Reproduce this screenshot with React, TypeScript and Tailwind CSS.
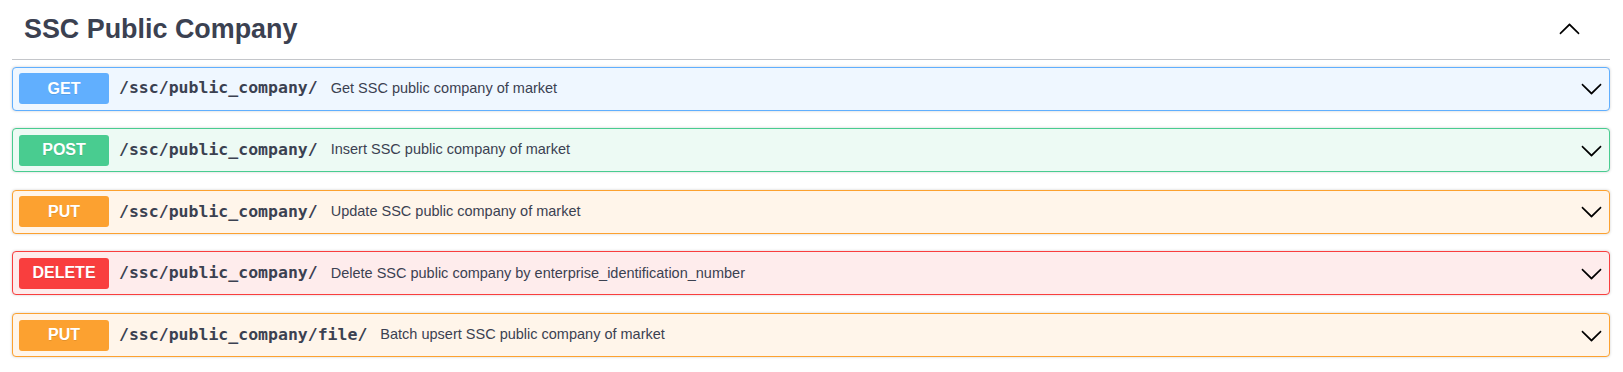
import React from 'react';

type Method = 'GET' | 'POST' | 'PUT' | 'DELETE';

interface Operation {
  method: Method;
  path: string;
  summary: string;
}

const operations: Operation[] = [
  { method: 'GET', path: '/ssc/public_company/', summary: 'Get SSC public company of market' },
  { method: 'POST', path: '/ssc/public_company/', summary: 'Insert SSC public company of market' },
  { method: 'PUT', path: '/ssc/public_company/', summary: 'Update SSC public company of market' },
  { method: 'DELETE', path: '/ssc/public_company/', summary: 'Delete SSC public company by enterprise_identification_number' },
  { method: 'PUT', path: '/ssc/public_company/file/', summary: 'Batch upsert SSC public company of market' },
];

// block / badge colours per method (swagger palette)
const methodStyles: Record<Method, { block: string; badge: string }> = {
  GET: { block: 'border-[#61affe] bg-[#eff7ff]', badge: 'bg-[#61affe]' },
  POST: { block: 'border-[#49cc90] bg-[#edfaf4]', badge: 'bg-[#49cc90]' },
  PUT: { block: 'border-[#fca130] bg-[#fff5ea]', badge: 'bg-[#fca130]' },
  DELETE: { block: 'border-[#f93e3e] bg-[#feecec]', badge: 'bg-[#f93e3e]' },
};

const Arrow: React.FC<{ up?: boolean }> = ({ up }) => (
  <svg
    width="23"
    height="23"
    viewBox="0 0 20 20"
    className={`shrink-0 fill-current text-black ${up ? 'rotate-180' : ''}`}
    aria-hidden="true"
  >
    <path d="M17.418 6.109c.272-.268.709-.268.979 0s.271.701 0 .969l-7.908 7.83c-.27.268-.707.268-.979 0l-7.908-7.83c-.27-.268-.27-.701 0-.969.271-.268.709-.268.979 0L10 13.25l7.418-7.141z" />
  </svg>
);

const OperationRow: React.FC<{ op: Operation }> = ({ op }) => {
  const style = methodStyles[op.method];
  return (
    <div
      className={`flex h-[44px] items-center rounded-[4px] border pl-[6px] pr-[6px] shadow-[0_0_3px_rgba(0,0,0,0.19)] ${style.block}`}
    >
      <span
        className={`flex h-[31px] w-[90px] shrink-0 items-center justify-center rounded-[3px] text-[16px] font-bold text-white [text-shadow:0_1px_0_rgba(0,0,0,0.1)] ${style.badge}`}
        style={{ fontFamily: '"Liberation Sans", Arial, sans-serif' }}
      >
        {op.method}
      </span>
      <span
        className="pl-[10px] pr-[13px] text-[16.5px] font-bold text-[#3b4151]"
        style={{ fontFamily: '"DejaVu Sans Mono", monospace' }}
      >
        {op.path}
      </span>
      <span
        className="flex-1 text-[14.5px] text-[#3b4151]"
        style={{ fontFamily: '"Liberation Sans", Arial, sans-serif' }}
      >
        {op.summary}
      </span>
      <Arrow />
    </div>
  );
};

export default function App() {
  return (
    <div className="min-h-screen bg-white pl-[12px] pr-[13px]">
      {/* Tag header */}
      <div className="flex h-[60px] items-center border-b border-[rgba(59,65,81,0.3)] pl-[12px] pr-[29px]">
        <h3
          className="flex-1 text-[26.9px] font-bold text-[#3b4151]"
          style={{ fontFamily: '"Liberation Sans", Arial, sans-serif' }}
        >
          SSC Public Company
        </h3>
        <Arrow up />
      </div>

      {/* Operations */}
      <div className="flex flex-col gap-[17.6px] pt-[6.7px]">
        {operations.map((op, i) => (
          <OperationRow key={i} op={op} />
        ))}
      </div>
    </div>
  );
}
